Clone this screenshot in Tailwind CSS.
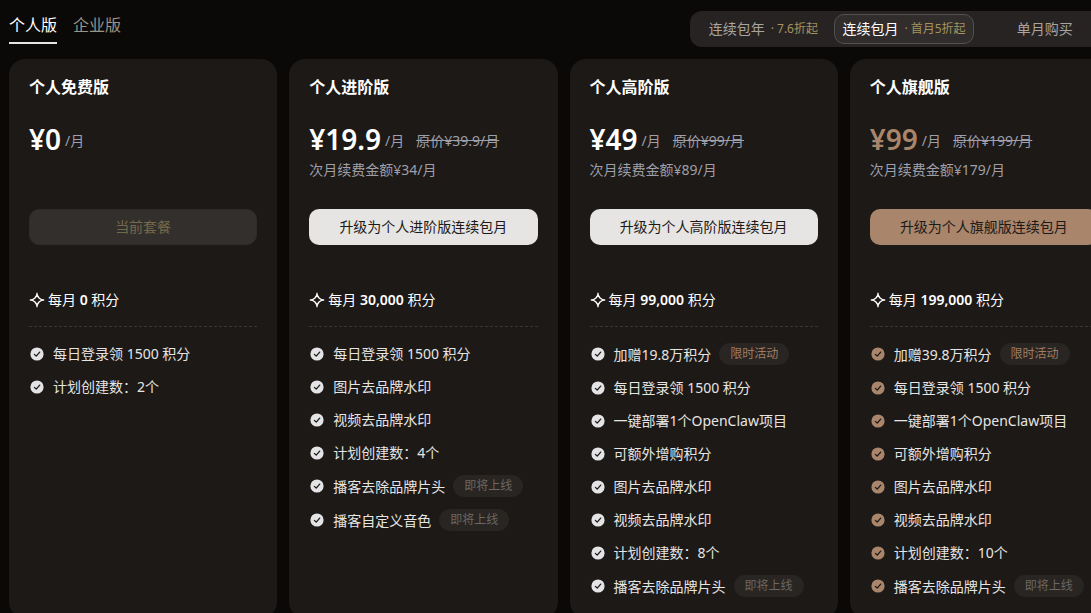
<!DOCTYPE html>
<html lang="zh-CN">
	<head>
		<meta charset="UTF-8">
		<meta name="viewport" content="width=device-width, initial-scale=1.0">
		<title>会员套餐</title>
		<script src="https://cdn.jsdelivr.net/npm/@tailwindcss/browser@4"></script>
	</head>
	<body class="bg-[#0a0908] min-h-screen overflow-hidden text-sm text-[#e6e5e3] font-['Noto_Sans','Noto_Sans_CJK_SC',sans-serif]">
		<div class="pl-[9px] -mr-[27px]">
			<!-- 顶部导航 -->
			<header class="flex items-start justify-between pt-[11px] pb-3">
				<nav class="flex gap-4 text-base leading-7">
					<a href="#personal" class="border-b-2 border-[#e6e5e3] pb-[3px] text-white">个人版</a>
					<a href="#business" class="pb-[3px] text-[#9a958a]">企业版</a>
				</nav>

				<!-- 付费周期 -->
				<div class="grid grid-cols-3 w-[428px] h-9 p-[3px] rounded-xl bg-[#272322] text-[#a8a4a0]">
					<button type="button" class="flex items-center justify-center gap-[6px] rounded-[10px]">连续包年 <span class="text-xs text-[#a5935f]">· 7.6折起</span></button>
					<button type="button" class="flex items-center justify-center gap-[6px] rounded-[10px] border border-[#54504d] bg-[#312d2c] text-white">连续包月 <span class="text-xs text-[#a5935f]">· 首月5折起</span></button>
					<button type="button" class="flex items-center justify-center rounded-[10px]">单月购买</button>
				</div>
			</header>

			<!-- 套餐卡片由 plans 数组生成 -->
			<main id="plans" class="grid grid-cols-4 gap-3"></main>
		</div>

		<script>
			const soon = '即将上线';
			const promo = '限时活动';

			const plans = [
				{
					name: '个人免费版', price: '0', credits: '0',
					features: [['每日登录领 1500 积分'], ['计划创建数：2个']]
				},
				{
					name: '个人进阶版', price: '19.9', old: '39.9', renew: '34', credits: '30,000',
					features: [['每日登录领 1500 积分'], ['图片去品牌水印'], ['视频去品牌水印'], ['计划创建数：4个'], ['播客去除品牌片头', soon], ['播客自定义音色', soon]]
				},
				{
					name: '个人高阶版', price: '49', old: '99', renew: '89', credits: '99,000',
					features: [['加赠19.8万积分', promo], ['每日登录领 1500 积分'], ['一键部署1个OpenClaw项目'], ['可额外增购积分'], ['图片去品牌水印'], ['视频去品牌水印'], ['计划创建数：8个'], ['播客去除品牌片头', soon]]
				},
				{
					name: '个人旗舰版', price: '99', old: '199', renew: '179', credits: '199,000', gold: true,
					features: [['加赠39.8万积分', promo], ['每日登录领 1500 积分'], ['一键部署1个OpenClaw项目'], ['可额外增购积分'], ['图片去品牌水印'], ['视频去品牌水印'], ['计划创建数：10个'], ['播客去除品牌片头', soon]]
				}
			];

			function featureRow([text, tag], gold) {
				const tagColor = tag === promo ? 'text-[#a07c62]' : 'text-[#6b6762]';
				return `
					<li class="flex items-center gap-2">
						<svg class="size-4 shrink-0 ${gold ? 'text-[#a9856b]' : 'text-[#e4e4e7]'}" viewBox="0 0 16 16" fill="none">
							<circle cx="8" cy="8" r="6.6" fill="currentColor"/>
							<path d="M5.4 8.4l1.8 1.7 3.5-4" stroke="#1c1917" stroke-width="1.3" stroke-linecap="round" stroke-linejoin="round"/>
						</svg>
						<span class="leading-[21px]">${text}</span>
						${tag ? `<span class="rounded-full bg-[#282523] px-[11px] text-xs leading-[22px] ${tagColor}">${tag}</span>` : ''}
					</li>`;
			}

			function planCard(plan) {
				const button = plan.renew
					? `<button type="button" class="h-9 w-full rounded-[10px] text-[#1c1917] ${plan.gold ? 'bg-[#a9856b]' : 'bg-[#e6e5e3]'}">升级为${plan.name}连续包月</button>`
					: `<button type="button" disabled class="h-9 w-full rounded-[10px] border border-[#2d2c2c] bg-[#332f2c] text-[#74694a]">当前套餐</button>`;
				return `
					<section class="min-h-[559px] rounded-2xl bg-[#1c1917] px-5 pt-4 pb-5">
						<h2 class="text-base leading-6 font-bold text-white">${plan.name}</h2>
						<div class="mt-5 flex h-10 items-center whitespace-nowrap text-[#9f9fa9]">
							<span class="text-[28px] leading-10 font-semibold ${plan.gold ? 'text-[#a9856b]' : 'text-white'}">¥${plan.price}</span>
							<span class="ml-1 pt-1">/月</span>
							${plan.old ? `<del class="ml-3 pt-1">原价¥${plan.old}/月</del>` : ''}
						</div>
						<p class="mt-px h-5 leading-5 text-[#9f9fa9]">${plan.renew ? `次月续费金额¥${plan.renew}/月` : ''}</p>
						<div class="mt-[29px]">${button}</div>
						<p class="mt-[45px] flex items-center gap-[3px] leading-5 text-white">
							<svg class="size-4 shrink-0" viewBox="0 0 16 16" fill="none">
								<path d="M8 3.1Q8.9 7.1 12.9 8 8.9 8.9 8 12.9 7.1 8.9 3.1 8 7.1 7.1 8 3.1z" stroke="none"/>
								<path d="M8 3L10 6 13 8 10 10 8 13 6 10 3 8 6 6z" stroke="currentColor" stroke-width="1.4"/>
								<path d="M8 .8v2.6M8 12.6v2.6M.8 8h2.6M12.6 8h2.6" stroke="currentColor" stroke-width="1.3"/>
							</svg>
							<span>每月 <b class="font-semibold">${plan.credits}</b> 积分</span>
						</p>
						<ul class="mt-4 space-y-3 border-t border-dashed border-[#3a3633] pt-4">
							${plan.features.map(feature => featureRow(feature, plan.gold)).join('')}
						</ul>
					</section>`;
			}

			document.getElementById('plans').innerHTML = plans.map(planCard).join('');
		</script>
	</body>
</html>
